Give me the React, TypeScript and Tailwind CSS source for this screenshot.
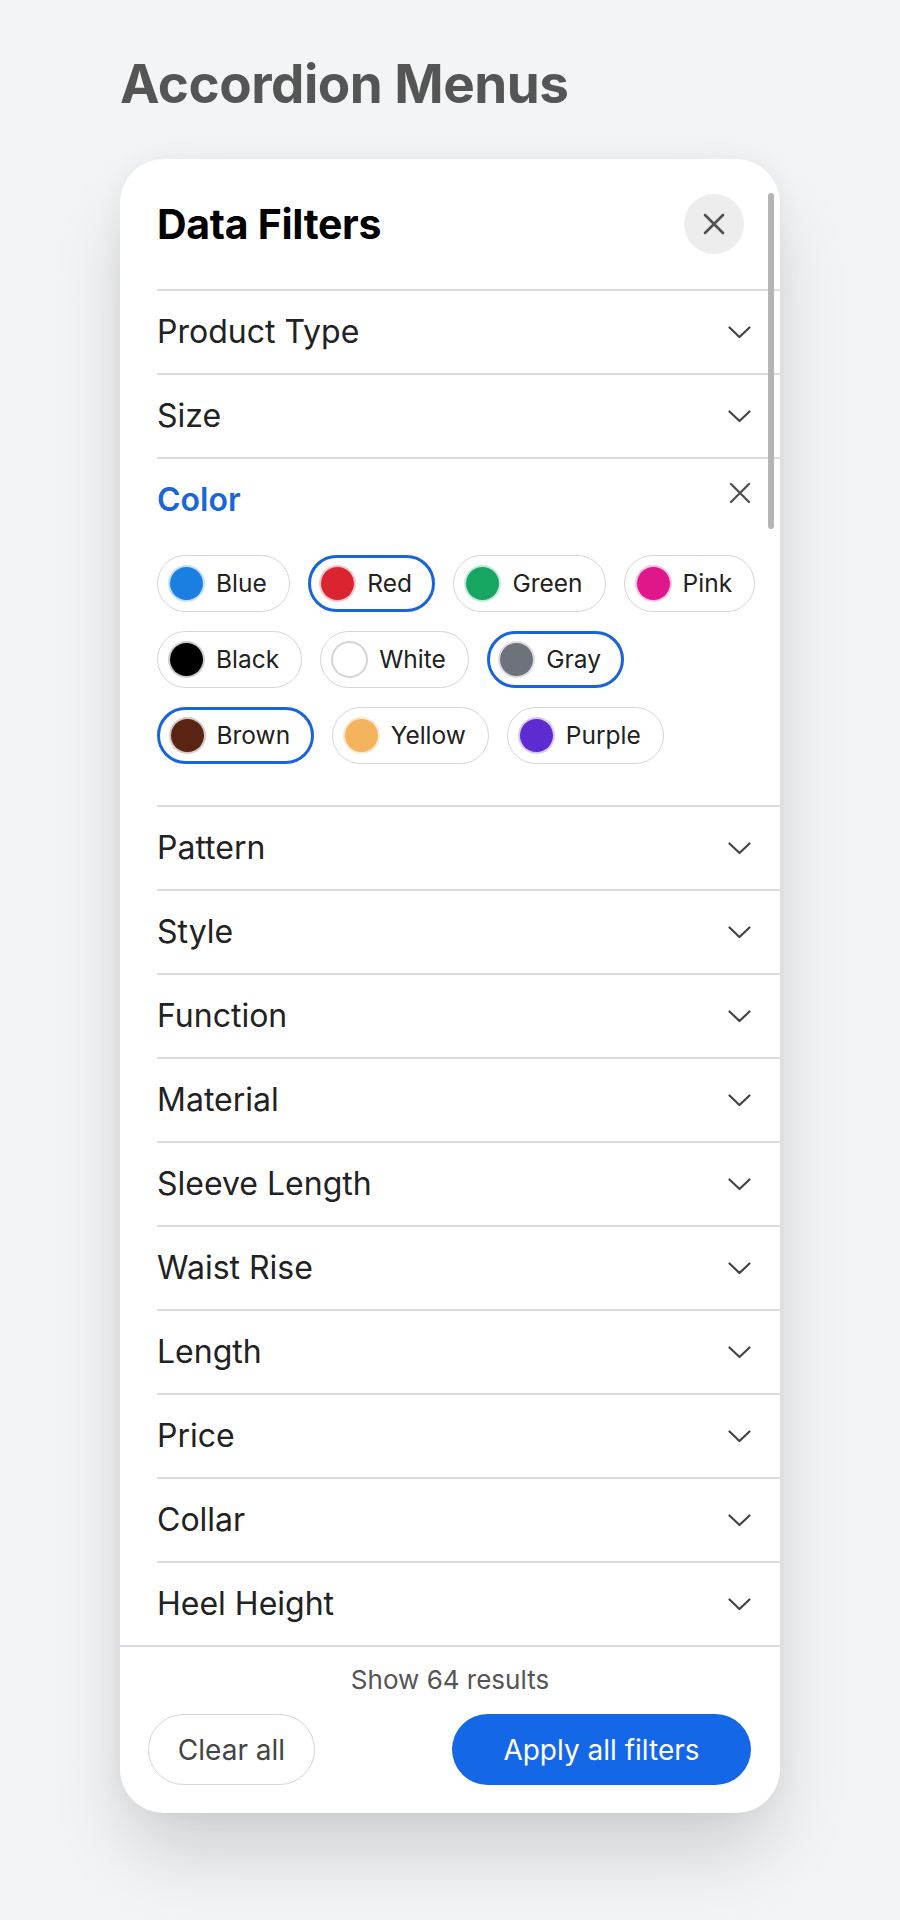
const rowsTop = ["Product Type", "Size"];
const rowsBottom = [
  "Pattern",
  "Style",
  "Function",
  "Material",
  "Sleeve Length",
  "Waist Rise",
  "Length",
  "Price",
  "Collar",
  "Heel Height",
];

const colors = [
  { name: "Blue", dot: "bg-[#1b7fe2] ring-[#1b7fe2]/25", selected: false },
  { name: "Red", dot: "bg-[#dc2430] ring-[#dc2430]/25", selected: true },
  { name: "Green", dot: "bg-[#17a563] ring-[#17a563]/25", selected: false },
  { name: "Pink", dot: "bg-[#e0168b] ring-[#e0168b]/25", selected: false },
  { name: "Black", dot: "bg-black ring-black/20", selected: false },
  { name: "White", dot: "bg-white ring-[#d4d4d4]", selected: false },
  { name: "Gray", dot: "bg-[#6e737b] ring-[#6e737b]/25", selected: true },
  { name: "Brown", dot: "bg-[#5a2412] ring-[#5a2412]/25", selected: true },
  { name: "Yellow", dot: "bg-[#f4b45e] ring-[#f4b45e]/30", selected: false },
  { name: "Purple", dot: "bg-[#5d2bd0] ring-[#5d2bd0]/25", selected: false },
];

function Chevron() {
  return (
    <svg width="23" height="13" viewBox="0 0 23 13" fill="none">
      <path d="M1.5 1.5L11.5 11L21.5 1.5" stroke="#444" strokeWidth="2.2" strokeLinecap="round" strokeLinejoin="round" />
    </svg>
  );
}

function Cross({ size = 22, width = 2.6 }: { size?: number; width?: number }) {
  return (
    <svg width={size} height={size} viewBox="0 0 22 22" fill="none">
      <path d="M2 2L20 20M20 2L2 20" stroke="#505050" strokeWidth={width} strokeLinecap="round" />
    </svg>
  );
}

function Row({ label }: { label: string }) {
  return (
    <div className="flex h-[84px] items-center justify-between border-t-2 border-[#dcdcdc] pr-[29px]">
      <span className="text-[32px] leading-[40px] text-[#222]">{label}</span>
      <Chevron />
    </div>
  );
}

export default function App() {
  return (
    <div className="min-h-[1920px] w-full bg-[#f3f4f6] px-[120px] pt-[56px] font-['Inter',sans-serif]">
      <h1 className="text-[53px] font-bold leading-[56px] tracking-[-0.5px] text-[#555]">Accordion Menus</h1>

      <div className="relative mt-[47px] w-[660px] overflow-hidden rounded-[44px] bg-white shadow-[0_45px_80px_-10px_rgba(0,0,0,0.16),0_0_24px_rgba(0,0,0,0.05)]">
        <div className="flex h-[130px] items-center justify-between pl-[37px] pr-[36px]">
          <span className="text-[41px] font-bold leading-none tracking-[-0.3px] text-black">Data Filters</span>
          <button className="flex h-[60px] w-[60px] items-center justify-center rounded-full bg-[#ededed]">
            <Cross />
          </button>
        </div>

        <div className="pl-[37px]">
          {rowsTop.map((r) => (
            <Row key={r} label={r} />
          ))}

          <div className="border-t-2 border-[#dcdcdc] pb-[41px]">
            <div className="flex h-[82px] items-center justify-between pr-[29px]">
              <span className="text-[32px] font-semibold leading-[40px] text-[#1a66d9]">Color</span>
              <span className="mb-[14px]">
                <Cross width={2.3} />
              </span>
            </div>
            <div className="mt-[14px] flex flex-wrap gap-x-[18px] gap-y-[19px] pr-[20px]">
              {colors.map((c) => (
                <div
                  key={c.name}
                  className={
                    c.selected
                      ? "flex h-[57px] items-center gap-[13px] rounded-full border-[3px] border-[#1864dc] pl-[10.5px] pr-[20.5px]"
                      : "flex h-[57px] items-center gap-[13px] rounded-full border-[1.5px] border-[#d6d6d6] pl-[12px] pr-[22px]"
                  }
                >
                  <span className={"h-[33px] w-[33px] rounded-full ring-2 " + c.dot} />
                  <span className="text-[24.5px] leading-none text-[#222]">{c.name}</span>
                </div>
              ))}
            </div>
          </div>

          {rowsBottom.map((r) => (
            <Row key={r} label={r} />
          ))}
        </div>

        <div className="border-t-2 border-[#dcdcdc] px-[28px] pb-[28px] pt-[17px]">
          <div className="text-center text-[26px] leading-[32px] text-[#555]">Show 64 results</div>
          <div className="mt-[18px] flex items-center justify-between">
            <button className="flex h-[71px] w-[167px] items-center justify-center rounded-full border-[1.5px] border-[#d6d6d6] text-[28px] text-[#444]">
              Clear all
            </button>
            <button className="mr-[1px] flex h-[71px] w-[299px] items-center justify-center rounded-full bg-[#1467e6] text-[28px] text-white">
              Apply all filters
            </button>
          </div>
        </div>

        <div className="absolute right-[6px] top-[34px] h-[336px] w-[6px] rounded-full bg-[#b5b5b5]" />
      </div>
    </div>
  );
}
